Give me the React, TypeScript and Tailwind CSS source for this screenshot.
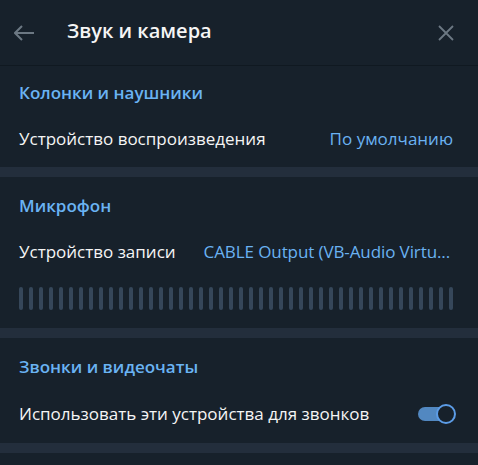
import React, { useState } from 'react';

const bars = Array.from({ length: 44 }, (_, i) => i);

const SectionTitle: React.FC<{ children: React.ReactNode }> = ({ children }) => (
  <div className="h-[28px] flex items-center px-[19px] text-[17px] font-semibold text-[#6ab3f3]">
    {children}
  </div>
);

export default function App() {
  const [useForCalls, setUseForCalls] = useState(true);

  return (
    <div
      className="w-[478px] h-[465px] bg-[#17212b] text-[#f5f5f5] overflow-hidden"
      style={{ fontFamily: '"Open Sans", "Noto Sans", sans-serif' }}
    >
      {/* header */}
      <div className="h-[66px] flex items-center border-b border-[#101921]">
        <button className="w-[67px] h-full flex items-center pl-[14px] text-[#6c7883]">
          <svg width="20" height="16" viewBox="0 0 20 16" fill="none" stroke="currentColor" strokeWidth="2">
            <path d="M1 8h19M8 1L1 8l7 7" />
          </svg>
        </button>
        <h1 className="flex-1 text-[20px] font-semibold leading-none -mt-[4px]">Звук и камера</h1>
        <button className="w-[48px] h-full flex items-center justify-center pr-[16px] text-[#6c7883]">
          <svg width="16" height="16" viewBox="0 0 16 16" fill="none" stroke="currentColor" strokeWidth="1.8">
            <path d="M1 1l14 14M15 1L1 15" />
          </svg>
        </button>
      </div>

      {/* speakers */}
      <section className="pt-[13px] pb-[10px]">
        <SectionTitle>Колонки и наушники</SectionTitle>
        <div className="mt-[14px] h-[36px] flex items-center justify-between px-[19px] pr-[25px] text-[17px]">
          <span>Устройство воспроизведения</span>
          <span className="text-[#6ab2f2]">По умолчанию</span>
        </div>
      </section>
      <div className="h-[10px] bg-[#232e3c]" />

      {/* microphone */}
      <section className="pt-[15px] pb-[18px]">
        <SectionTitle>Микрофон</SectionTitle>
        <div className="mt-[14px] h-[36px] flex items-center gap-[28px] pl-[19px] text-[17px]">
          <span className="shrink-0">Устройство записи</span>
          <span className="shrink-0 whitespace-nowrap text-[#6ab2f2] tracking-[-0.1px]">CABLE Output (VB-Audio Virtu...</span>
        </div>
        <div className="mt-[17px] h-[23px] flex gap-[6px] px-[19px]">
          {bars.map((b) => (
            <div key={b} className="w-[4px] h-full rounded-full bg-[#36475a]" />
          ))}
        </div>
      </section>
      <div className="h-[10px] bg-[#232e3c]" />

      {/* calls */}
      <section className="pt-[15px] pb-[11px]">
        <SectionTitle>Звонки и видеочаты</SectionTitle>
        <div className="mt-[15px] h-[36px] flex items-center justify-between px-[19px] pr-[22px] text-[17px]">
          <span>Использовать эти устройства для звонков</span>
          <button
            onClick={() => setUseForCalls(!useForCalls)}
            className="relative w-[38px] h-[22px] flex items-center"
          >
            <span className={`absolute left-0 w-[28px] h-[14px] rounded-full ${useForCalls ? 'bg-[#5288c1]' : 'bg-[#3f4d5c]'}`} />
            <span
              className={`absolute top-[1px] w-[20px] h-[20px] rounded-full border-2 bg-[#17212b] ${
                useForCalls ? 'left-[18px] border-[#5c9ce6]' : 'left-0 border-[#3f4d5c]'
              }`}
            />
          </button>
        </div>
      </section>
      <div className="h-[10px] bg-[#232e3c]" />
    </div>
  );
}
